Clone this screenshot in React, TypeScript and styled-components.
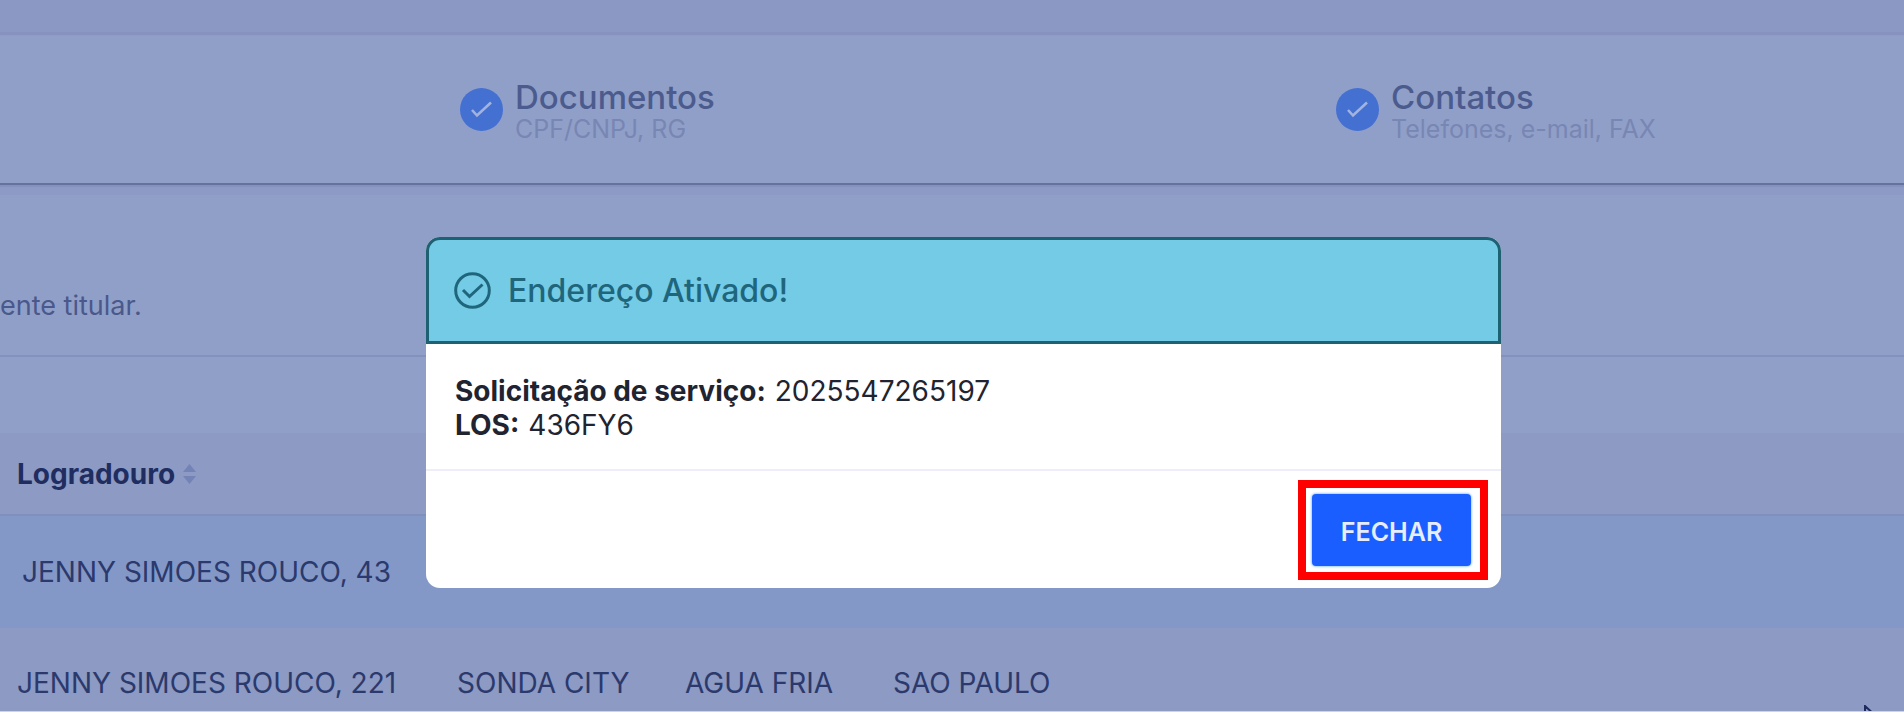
import React from "react";
import styled, { createGlobalStyle } from "styled-components";

const GlobalStyle = createGlobalStyle`
  *, *::before, *::after { box-sizing: border-box; }
  body {
    margin: 0;
    font-family: Inter, "Liberation Sans", sans-serif;
    font-size: 28px;
    line-height: 34px;
    color: #2b396c;
  }
`;

const Page = styled.div`
  position: relative;
  height: 100vh;
  overflow: hidden;
  background: #909fc8;
  border-bottom: 1px solid #cdd3e8;
`;

const TopStrip = styled.div`
  height: 36px;
  background: linear-gradient(#8b98c3 0 32px, #8793be 32px 35px, #8d9bc5 35px);
`;

const Steps = styled.ol`
  display: grid;
  grid-template-columns: 876px 1fr;
  margin: 0;
  padding: 45px 0 39px 460px;
  list-style: none;
  border-bottom: 2px solid #6572a0;
`;

const Step = styled.li`
  display: flex;
  align-items: flex-start;
  gap: 12px;
`;

const StepBadge = styled.svg`
  flex: none;
  width: 43px;
  height: 43px;
  margin-top: 7px;
`;

const StepTitle = styled.div`
  font-size: 33px;
  line-height: 33px;
  font-weight: 500;
  color: #4b5b8e;
`;

const StepHint = styled.div`
  font-size: 25px;
  line-height: 30px;
  color: #7886b3;
`;

const Intro = styled.section`
  padding: 104px 0 32px;
  border-bottom: 2px solid #8491be;
  background: linear-gradient(#8492bb 0 2px, #8d9ac5 2px 10px, #909fc8 10px);
  color: #4a588b;

  p { margin: 0; font-size: 27px; }
`;

const AddressTable = styled.table`
  width: 100%;
  margin-top: 76px;
  border-collapse: collapse;
  table-layout: fixed;
  background: #8c9ac4;
`;

const HeadCell = styled.th<{ $width?: number }>`
  width: ${(p) => (p.$width ? `${p.$width}px` : "auto")};
  height: 82px;
  padding: 0 0 0 17px;
  text-align: left;
  font-weight: 700;
  color: #1f2d60;
  border-bottom: 2px solid #8090bd;
`;

const SortButton = styled.button`
  display: flex;
  align-items: center;
  gap: 8px;
  padding: 0;
  border: 0;
  background: none;
  font: inherit;
  color: inherit;
`;

const Row = styled.tr<{ $selected?: boolean }>`
  height: ${(p) => (p.$selected ? 113 : 110)}px;
  background: ${(p) => (p.$selected ? "#8498c7" : "#8c9ac4")};

  td { padding: 0 0 0 17px; white-space: nowrap; }
  td:first-child { padding-left: ${(p) => (p.$selected ? 22 : 17)}px; }
`;

const Overlay = styled.div`
  position: absolute;
  inset: 0;
  display: flex;
  justify-content: center;
  align-items: flex-start;
  padding: 237px 0 0 23px;
`;

const Dialog = styled.div`
  width: 1075px;
  max-width: 90%;
  border-radius: 14px;
  background: #fff;
  color: #1f2430;
`;

const DialogHeader = styled.header`
  display: flex;
  align-items: center;
  gap: 17px;
  height: 107px;
  padding: 0 25px;
  border: 3px solid #1e6173;
  border-radius: 14px 14px 0 0;
  background: #74cbe6;
  color: #1f667c;

  svg { flex: none; width: 37px; height: 37px; }
  h2 { margin: 0; font-size: 32px; line-height: 40px; font-weight: 500; }
`;

const Details = styled.dl`
  margin: 0;
  padding: 30px 29px 27px;
  border-bottom: 2px solid #eeeef9;

  div { display: flex; gap: 9px; }
  dt { font-weight: 700; }
  dd { margin: 0; }
`;

const DialogFooter = styled.footer`
  display: flex;
  justify-content: flex-end;
  padding: 23px 30px 22px;
`;

const Highlight = styled.div`
  position: relative;

  &::after {
    content: "";
    position: absolute;
    inset: -14px -17px -14px -14px;
    border: 8px solid #ff0000;
    pointer-events: none;
  }
`;

const CloseButton = styled.button`
  display: block;
  width: 159px;
  height: 72px;
  padding: 3px 0 0;
  border: 0;
  border-radius: 4px;
  background: #1a5eff;
  box-shadow: 0 0 2px 1px #9fd0ff;
  font: inherit;
  font-size: 25px;
  font-weight: 600;
  color: #e6edff;
`;

const Pointer = styled.svg`
  position: absolute;
  left: 98%;
  bottom: -14px;
  width: 14px;
  height: 20px;
  margin-left: -2px;
`;

function StepItem({ title, hint }: { title: string; hint: string }) {
  return (
    <Step>
      <StepBadge viewBox="0 0 43 43" aria-hidden="true">
        <circle cx="21.5" cy="21.5" r="21.5" fill="#4470d2" />
        <path d="M12 22 L17 27.5 L31 14.5" fill="none" stroke="#a3b3dc" strokeWidth="2.6" />
      </StepBadge>
      <div>
        <StepTitle>{title}</StepTitle>
        <StepHint>{hint}</StepHint>
      </div>
    </Step>
  );
}

export default function App() {
  return (
    <Page>
      <GlobalStyle />
      <TopStrip />
      <Steps>
        <StepItem title="Documentos" hint="CPF/CNPJ, RG" />
        <StepItem title="Contatos" hint="Telefones, e-mail, FAX" />
      </Steps>
      <Intro>
        <p>ente titular.</p>
      </Intro>
      <AddressTable>
        <thead>
          <tr>
            <HeadCell $width={440}>
              <SortButton type="button">
                Logradouro
                <svg width="13" height="20" viewBox="0 0 13 20" fill="#7383b5" aria-hidden="true">
                  <path d="M6.5 0 L13 8 H0 Z M0 12 H13 L6.5 20 Z" />
                </svg>
              </SortButton>
            </HeadCell>
            <HeadCell $width={228} />
            <HeadCell $width={208} />
            <HeadCell />
          </tr>
        </thead>
        <tbody>
          <Row $selected>
            <td>JENNY SIMOES ROUCO, 43</td>
            <td />
            <td />
            <td />
          </Row>
          <Row>
            <td>JENNY SIMOES ROUCO, 221</td>
            <td>SONDA CITY</td>
            <td>AGUA FRIA</td>
            <td>SAO PAULO</td>
          </Row>
        </tbody>
      </AddressTable>

      <Overlay>
        <Dialog role="dialog" aria-modal="true" aria-labelledby="dialog-title">
          <DialogHeader>
            <svg viewBox="0 0 37 37" fill="none" stroke="currentColor" strokeWidth="3" aria-hidden="true">
              <circle cx="18.5" cy="18.5" r="16.8" />
              <path d="M9 18 L15.5 24.5 L28.5 12.5" />
            </svg>
            <h2 id="dialog-title">Endereço Ativado!</h2>
          </DialogHeader>
          <Details>
            <div>
              <dt>Solicitação de serviço:</dt>
              <dd>2025547265197</dd>
            </div>
            <div>
              <dt>LOS:</dt>
              <dd>436FY6</dd>
            </div>
          </Details>
          <DialogFooter>
            <Highlight>
              <CloseButton type="button">FECHAR</CloseButton>
            </Highlight>
          </DialogFooter>
        </Dialog>
      </Overlay>

      <Pointer viewBox="0 0 14 20" aria-hidden="true">
        <path d="M1 1 V16 L5 12.5 L8 19 L10.5 18 L7.5 11.5 H12.5 Z" fill="#8c9ac4" stroke="#1d2a5e" strokeWidth="2" />
      </Pointer>
    </Page>
  );
}
